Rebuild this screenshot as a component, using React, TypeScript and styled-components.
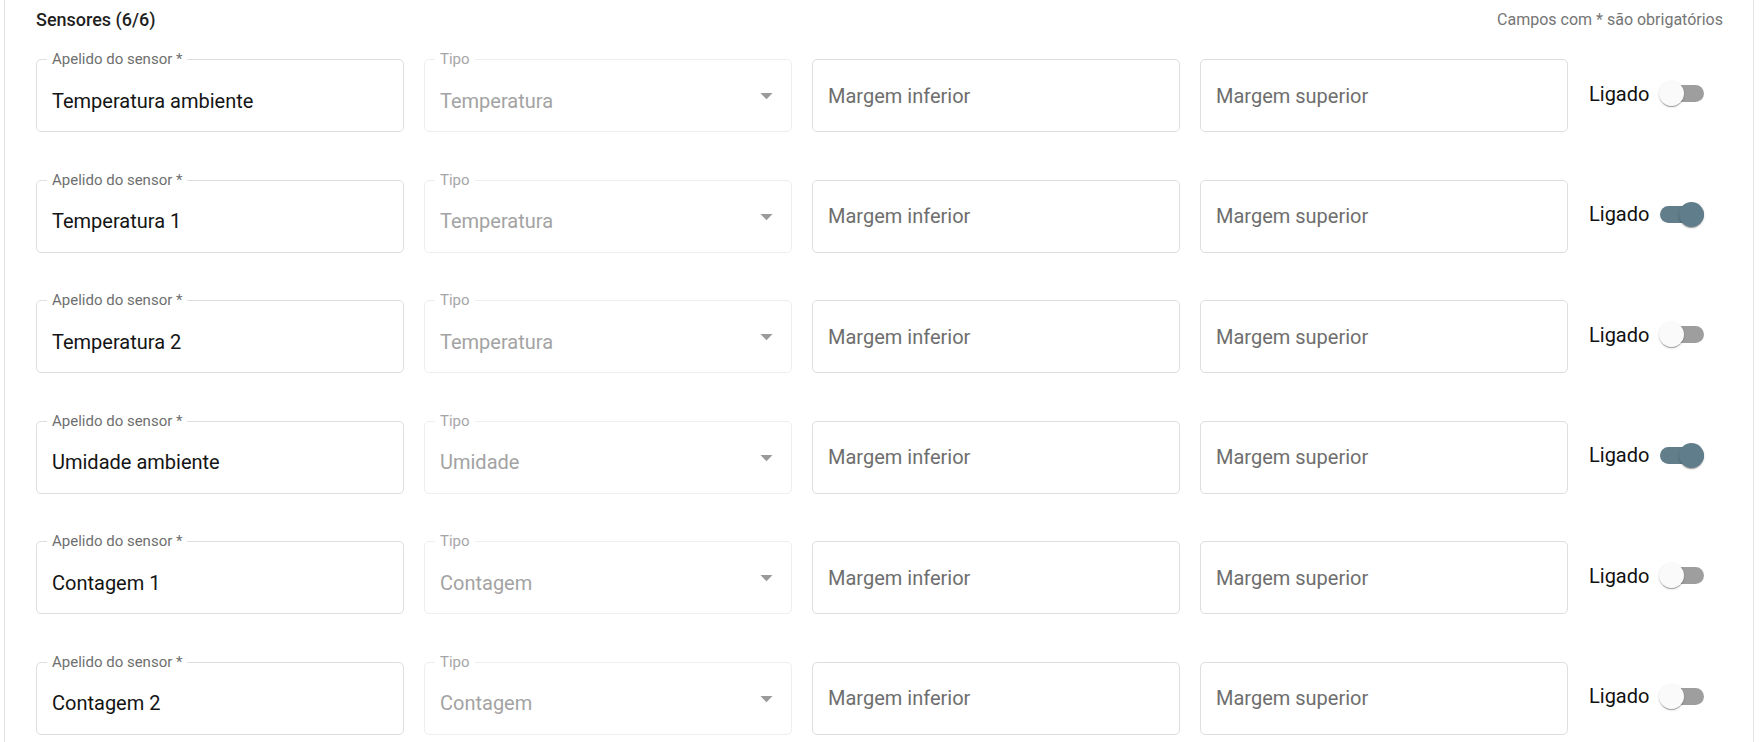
import React from 'react';
import styled, { createGlobalStyle } from 'styled-components';

const GlobalStyle = createGlobalStyle`
  body {
    margin: 0;
    background: #ffffff;
    font-family: Roboto, "Liberation Sans", Arial, sans-serif;
    color: rgba(0, 0, 0, 0.87);
  }
`;

const Panel = styled.section`
  box-sizing: border-box;
  width: 1750px;
  margin-left: 4px;
  min-height: 742px;
  padding: 0 30px 24px 31px;
  border-left: 1px solid #e4e4e4;
  border-right: 1px solid #e4e4e4;
`;

const Header = styled.header`
  display: flex;
  align-items: center;
  justify-content: space-between;
  height: 38px;
`;

const Title = styled.h2`
  margin: 0;
  font-size: 18px;
  font-weight: 500;
  color: #1f1f1f;
`;

const Note = styled.span`
  font-size: 16px;
  color: #757575;
`;

const Rows = styled.div`
  display: flex;
  flex-direction: column;
  gap: 47.5px;
  padding-top: 21px;
`;

const Row = styled.div`
  display: grid;
  grid-template-columns: repeat(4, 368px) auto;
  column-gap: 20px;
  align-items: center;
`;

const Field = styled.div<{ $disabled?: boolean }>`
  position: relative;
  box-sizing: border-box;
  height: 73px;
  display: flex;
  align-items: center;
  justify-content: space-between;
  padding: 0 15px;
  border: 1px solid ${(p) => (p.$disabled ? '#eeeeee' : '#dedede')};
  border-radius: 5px;
  background: #fff;
`;

const FloatLabel = styled.span<{ $disabled?: boolean }>`
  position: absolute;
  top: -10px;
  left: 10px;
  padding: 0 5px;
  background: #fff;
  font-size: 15px;
  line-height: 18px;
  color: ${(p) => (p.$disabled ? '#a6a6a6' : '#6f6f6f')};
`;

const Value = styled.span<{ $muted?: boolean; $labelled?: boolean }>`
  font-size: 20px;
  padding-top: ${(p) => (p.$labelled ? '10px' : '0')};
  color: ${(p) => (p.$muted ? '#a3a3a3' : '#141414')};
`;

const Placeholder = styled.span`
  font-size: 20px;
  color: #6e6e6e;
`;

const Arrow = styled.svg`
  width: 29px;
  height: 29px;
  margin-right: -5px;
  fill: #9a9a9a;
`;

const SwitchCell = styled.label`
  display: flex;
  align-items: center;
  gap: 10px;
  padding-left: 1px;
  padding-bottom: 4px;
  font-size: 20px;
  color: #111;
`;

const SwitchBox = styled.span`
  position: relative;
  display: inline-flex;
  align-items: center;
  width: 44px;
  height: 25px;
  margin-left: 1px;
`;

const Track = styled.span<{ $on: boolean }>`
  width: 44px;
  height: 17px;
  border-radius: 9px;
  background: ${(p) => (p.$on ? '#627e8b' : '#9e9e9e')};
`;

const Thumb = styled.span<{ $on: boolean }>`
  position: absolute;
  top: 0;
  left: ${(p) => (p.$on ? '19px' : '-1px')};
  width: 25px;
  height: 25px;
  border-radius: 50%;
  background: ${(p) => (p.$on ? '#607d8b' : '#fafafa')};
  box-shadow: 0 2px 1px -1px rgba(0, 0, 0, 0.2), 0 1px 1px 0 rgba(0, 0, 0, 0.14),
    0 1px 3px 0 rgba(0, 0, 0, 0.12);
`;

type Sensor = { name: string; type: string; on: boolean };

const sensors: Sensor[] = [
  { name: 'Temperatura ambiente', type: 'Temperatura', on: false },
  { name: 'Temperatura 1', type: 'Temperatura', on: true },
  { name: 'Temperatura 2', type: 'Temperatura', on: false },
  { name: 'Umidade ambiente', type: 'Umidade', on: true },
  { name: 'Contagem 1', type: 'Contagem', on: false },
  { name: 'Contagem 2', type: 'Contagem', on: false },
];

function Toggle({ on }: { on: boolean }) {
  return (
    <SwitchBox>
      <Track $on={on} />
      <Thumb $on={on} />
    </SwitchBox>
  );
}

function SensorRow({ sensor }: { sensor: Sensor }) {
  return (
    <Row>
      <Field>
        <FloatLabel>Apelido do sensor *</FloatLabel>
        <Value $labelled>{sensor.name}</Value>
      </Field>
      <Field $disabled>
        <FloatLabel $disabled>Tipo</FloatLabel>
        <Value $labelled $muted>
          {sensor.type}
        </Value>
        <Arrow viewBox="0 0 24 24">
          <path d="M7 10l5 5 5-5z" />
        </Arrow>
      </Field>
      <Field>
        <Placeholder>Margem inferior</Placeholder>
      </Field>
      <Field>
        <Placeholder>Margem superior</Placeholder>
      </Field>
      <SwitchCell>
        Ligado
        <Toggle on={sensor.on} />
      </SwitchCell>
    </Row>
  );
}

export default function App() {
  return (
    <>
      <GlobalStyle />
      <Panel>
        <Header>
          <Title>Sensores (6/6)</Title>
          <Note>Campos com * são obrigatórios</Note>
        </Header>
        <Rows>
          {sensors.map((s) => (
            <SensorRow key={s.name} sensor={s} />
          ))}
        </Rows>
      </Panel>
    </>
  );
}
